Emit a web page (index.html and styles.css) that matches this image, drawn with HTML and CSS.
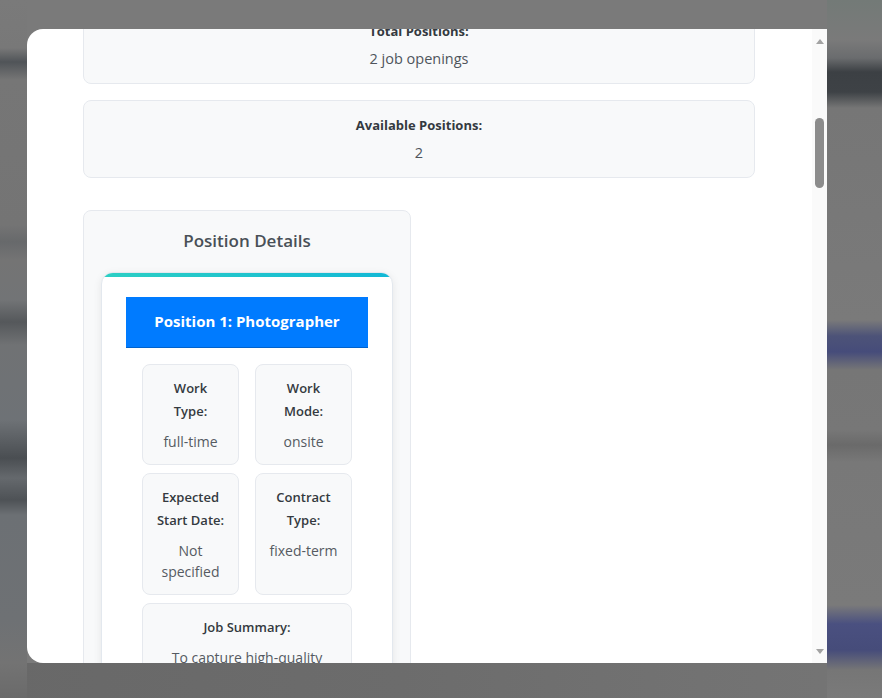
FILE: index.html
```html
<!DOCTYPE html>
<html lang="en">
<head>
<meta charset="utf-8">
<title>Job Posting Details</title>
<link rel="stylesheet" href="styles.css">
</head>
<body>
<div class="modal">
  <div class="modal-scroll">
    <div class="modal-content">
      <div class="stat-card">
        <div class="stat-label">Total Positions:</div>
        <div class="stat-value">2 job openings</div>
      </div>
      <div class="stat-card">
        <div class="stat-label">Available Positions:</div>
        <div class="stat-value">2</div>
      </div>
      <div class="positions-grid">
        <section class="position-section">
          <h3 class="section-title">Position Details</h3>
          <div class="position-card">
            <div class="position-title">Position 1: Photographer</div>
            <div class="info-grid">
              <div class="info-box">
                <div class="info-label">Work Type:</div>
                <div class="info-value">full-time</div>
              </div>
              <div class="info-box">
                <div class="info-label">Work Mode:</div>
                <div class="info-value">onsite</div>
              </div>
              <div class="info-box">
                <div class="info-label">Expected Start Date:</div>
                <div class="info-value">Not specified</div>
              </div>
              <div class="info-box">
                <div class="info-label">Contract Type:</div>
                <div class="info-value">fixed-term</div>
              </div>
              <div class="info-box wide">
                <div class="info-label">Job Summary:</div>
                <div class="info-value">To capture high-quality images for events, products and campaigns.</div>
              </div>
            </div>
          </div>
        </section>
      </div>
    </div>
  </div>
  <div class="scrollbar">
    <span class="arrow up"></span>
    <span class="thumb"></span>
    <span class="spacer"></span>
    <span class="arrow down"></span>
  </div>
</div>
</body>
</html>
```

FILE: styles.css
```css
* { box-sizing: border-box; }

html, body {
  margin: 0;
  width: 882px;
  height: 698px;
  overflow: hidden;
}

body {
  font-family: "Open Sans", "Noto Sans", sans-serif;
  background-color: #7a7a7a;
  background-image:
    linear-gradient(to bottom, #737a77 0, #7a7a7a 40px, #6a6c6e 58px, #3c4044 72px, #3e4246 92px, #767676 108px, #7a7a7a 320px, #4d5378 336px, #464c7a 352px, #767676 370px, #777777 430px, #6a6a6a 445px, #787878 462px, #7a7a7a 605px, #4a5080 624px, #464c7a 650px, #767676 670px, #7a7a7a 698px),
    linear-gradient(to bottom, #7a7a7a 0, #787878 48px, #505458 62px, #767676 80px, #747474 225px, #67696b 242px, #747474 260px, #727476 300px, #55585b 322px, #707274 345px, #6e7276 420px, #4a4e52 458px, #65696d 478px, #4e5256 500px, #6c7074 515px, #6e7174 620px, #737373 663px, #6a6a6a 698px),
    linear-gradient(to right, #686868 0, #6c6c6c 400px, #727272 700px, #757575 882px);
  background-size: 55px 698px, 27px 698px, 882px 35px;
  background-position: right top, left top, left bottom;
  background-repeat: no-repeat;
}

.modal {
  position: absolute;
  left: 27px;
  top: 29px;
  width: 800px;
  height: 634px;
  background: #ffffff;
  border-radius: 16px 0 0 16px;
  overflow: hidden;
  display: flex;
}

.modal-scroll {
  flex: 1;
  overflow: hidden;
}

.modal-content {
  margin-top: -23px;
  padding: 0 57px 0 56px;
  display: flex;
  flex-direction: column;
  gap: 16px;
}

.stat-card {
  background: #f8f9fa;
  border: 1px solid #e6e9ee;
  border-radius: 8px;
  padding: 14px;
  text-align: center;
}

.stat-label {
  font-size: 13px;
  font-weight: 700;
  line-height: 20px;
  color: #343a40;
}

.stat-value {
  margin-top: 8px;
  font-size: 14.5px;
  line-height: 20px;
  color: #4f555c;
}

.positions-grid {
  margin-top: 16px;
  display: grid;
  grid-template-columns: 1fr 1fr;
  gap: 16px;
}

.position-section {
  background: #f8f9fa;
  border: 1px solid #e6e9ee;
  border-radius: 8px;
  padding: 17px 17px;
}

.section-title {
  margin: 0 0 18px;
  font-size: 17px;
  font-weight: 600;
  line-height: 26px;
  color: #495057;
  text-align: center;
}

.position-card {
  position: relative;
  background: #ffffff;
  border: 1px solid #e3e8ee;
  border-radius: 12px;
  box-shadow: 0 2px 8px rgba(0, 0, 0, 0.08);
  padding: 24px;
  overflow: hidden;
}

.position-card::before {
  content: "";
  position: absolute;
  left: 0;
  right: 0;
  top: 0;
  height: 4px;
  background: linear-gradient(to right, #2ccfc4, #12b8d6);
}

.position-title {
  background: #007bff;
  color: #ffffff;
  font-size: 15px;
  font-weight: 700;
  line-height: 21px;
  padding: 14px 10px 15px;
  text-align: center;
  border-bottom: 1px solid #0062cc;
}

.info-grid {
  margin: 16px 16px 0;
  display: grid;
  grid-template-columns: 1fr 1fr;
  gap: 8px 16px;
}

.info-box {
  background: #f8f9fa;
  border: 1px solid #e6e9ee;
  border-radius: 8px;
  padding: 12px 12px;
  text-align: center;
}

.info-box.wide {
  grid-column: span 2;
}

.info-label {
  padding: 0 1.5px;
  font-size: 13px;
  font-weight: 600;
  line-height: 23px;
  color: #343a40;
}

.info-value {
  margin-top: 8px;
  font-size: 14px;
  line-height: 21px;
  color: #555b62;
}

.scrollbar {
  width: 15px;
  background: #fafafa;
  display: flex;
  flex-direction: column;
  align-items: center;
}

.arrow {
  width: 0;
  height: 0;
  border-left: 4px solid transparent;
  border-right: 4px solid transparent;
}

.arrow.up {
  margin-top: 10px;
  border-bottom: 5px solid #a3a3a3;
}

.arrow.down {
  margin-bottom: 9px;
  border-top: 5px solid #a3a3a3;
}

.thumb {
  margin-top: 74px;
  width: 9px;
  height: 70px;
  border-radius: 5px;
  background: #8c8c8c;
}

.spacer {
  flex: 1;
}
```
